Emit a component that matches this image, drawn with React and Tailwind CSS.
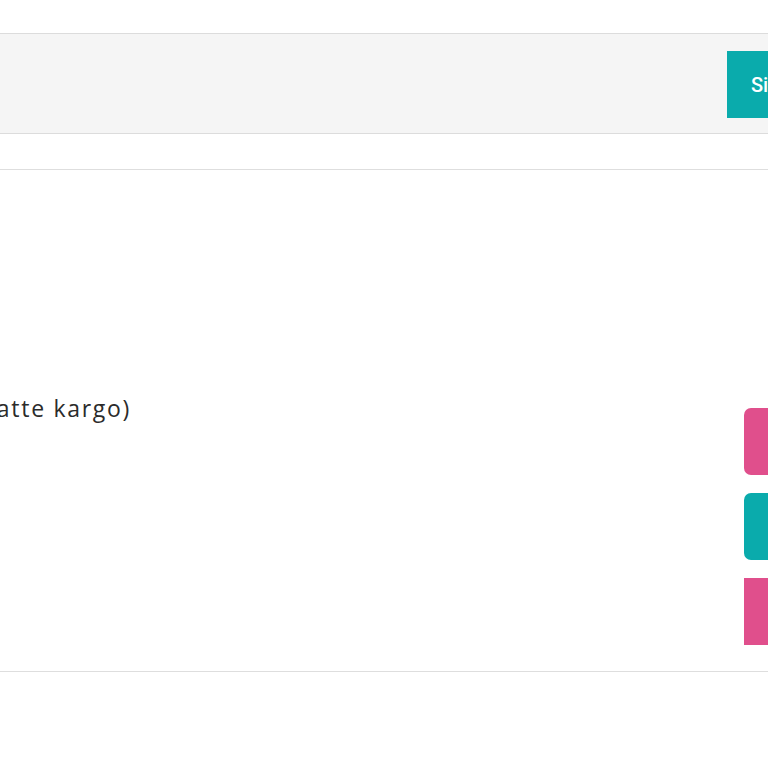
export default function App() {
  return (
    <div className="w-[768px] h-[768px] overflow-hidden bg-white" style={{ fontFamily: '"Open Sans", sans-serif' }}>
      <div className="h-[33px]" />
      <div className="h-[101px] bg-[#f5f5f5] border-y border-[#dcdcdc] flex items-start justify-end pt-[17px]">
        <div className="w-[41px] h-[67px] bg-[#0aabac] flex items-center pl-[24px] overflow-hidden">
          <span className="text-white text-[20px] font-medium whitespace-nowrap" style={{ fontFamily: '"Roboto", sans-serif' }}>Sipariş</span>
        </div>
      </div>
      <div className="h-[35px]" />
      <div className="h-[503px] border-y border-[#dedede] flex">
        <div className="flex-1 overflow-hidden">
          <div className="pt-[224px] w-[131px] flex justify-end">
            <p className="text-[#2b2b2b] text-[23px] tracking-[1.7px] whitespace-nowrap leading-[28px]">(Matte kargo)</p>
          </div>
        </div>
        <div className="w-[24px] flex flex-col pt-[238px] gap-[18px]">
          <div className="h-[67px] bg-[#e04f8c] rounded-l-[7px]" />
          <div className="h-[67px] bg-[#0aabac] rounded-l-[7px]" />
          <div className="h-[67px] bg-[#e04f8c]" />
        </div>
      </div>
    </div>
  );
}
